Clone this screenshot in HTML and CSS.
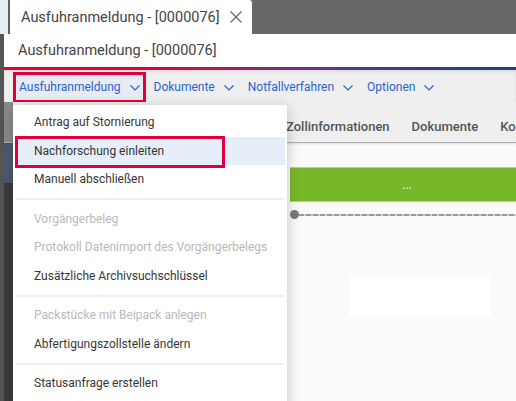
FILE: index.html
```html
<!DOCTYPE html>
<html lang="de">
<head>
<meta charset="utf-8">
<title>Ausfuhranmeldung</title>
<link rel="stylesheet" href="styles.css">
</head>
<body>
<div class="tabbar">
  <div class="tab-prev"></div>
  <div class="tab-sep"></div>
  <div class="tab">
    <span class="tab-title">Ausfuhranmeldung - [0000076]</span>
    <svg class="tab-close" width="12" height="12" viewBox="0 0 12 12"><path d="M0.5 0.5 L11.5 11.5 M11.5 0.5 L0.5 11.5" stroke="#666" stroke-width="1.2" fill="none"/></svg>
  </div>
</div>
<div class="window">
  <div class="header">Ausfuhranmeldung - [0000076]</div>
  <div class="accent"></div>
  <nav class="menubar">
    <div class="menu-item active"><span>Ausfuhranmeldung</span><svg class="chev" width="10" height="6" viewBox="0 0 10 6"><path d="M0.5 0.5 L5 5 L9.5 0.5" stroke="#2a63d4" stroke-width="1.2" fill="none"/></svg></div>
    <div class="menu-item"><span>Dokumente</span><svg class="chev" width="10" height="6" viewBox="0 0 10 6"><path d="M0.5 0.5 L5 5 L9.5 0.5" stroke="#2a63d4" stroke-width="1.2" fill="none"/></svg></div>
    <div class="menu-item"><span>Notfallverfahren</span><svg class="chev" width="10" height="6" viewBox="0 0 10 6"><path d="M0.5 0.5 L5 5 L9.5 0.5" stroke="#2a63d4" stroke-width="1.2" fill="none"/></svg></div>
    <div class="menu-item"><span>Optionen</span><svg class="chev" width="10" height="6" viewBox="0 0 10 6"><path d="M0.5 0.5 L5 5 L9.5 0.5" stroke="#2a63d4" stroke-width="1.2" fill="none"/></svg></div>
  </nav>
  <div class="tabs">
    <span class="tabs-edge"></span>
    <span class="tabs-item">Zollinformationen</span>
    <span class="tabs-item">Dokumente</span>
    <span class="tabs-item">Kontakte</span>
  </div>
  <div class="stage">
    <aside class="rail"><span class="rail-active"></span></aside>
    <div class="main">
      <div class="status-bar">...</div>
      <div class="timeline"><span class="dot"></span><span class="line"></span></div>
      <div class="placeholder"></div>
    </div>
  </div>
  <ul class="dropdown">
    <li class="dd-item">Antrag auf Stornierung</li>
    <li class="dd-item hover">Nachforschung einleiten</li>
    <li class="dd-item">Manuell abschließen</li>
    <li class="dd-sep"></li>
    <li class="dd-item disabled">Vorgängerbeleg</li>
    <li class="dd-item disabled">Protokoll Datenimport des Vorgängerbelegs</li>
    <li class="dd-item">Zusätzliche Archivsuchschlüssel</li>
    <li class="dd-sep"></li>
    <li class="dd-item disabled">Packstücke mit Beipack anlegen</li>
    <li class="dd-item">Abfertigungszollstelle ändern</li>
    <li class="dd-sep"></li>
    <li class="dd-item">Statusanfrage erstellen</li>
  </ul>
</div>
</body>
</html>
```
FILE: styles.css
```css
*, *::before, *::after { box-sizing: border-box; }
html, body { margin: 0; padding: 0; }
body {
  width: 516px;
  height: 401px;
  overflow: hidden;
  background: #555;
  font-family: Roboto, "Liberation Sans", sans-serif;
  color: #333;
}
.tabbar {
  display: flex;
  height: 34px;
  background: #676767;
}
.tab-prev { width: 8px; background: #e6eef8; }
.tab-sep { width: 2px; background: #5e5e5e; }
.tab {
  width: 242px;
  background: #fff;
  display: flex;
  align-items: center;
  padding-left: 11px;
  border-top-right-radius: 3px;
}
.tab-title { font-size: 14.5px; color: #444; }
.tab-close { margin-left: 10px; }
.window {
  position: relative;
  margin-left: 4px;
  height: 367px;
  background: #fafafa;
  display: flex;
  flex-direction: column;
}
.header {
  height: 33px;
  background: #fff;
  padding-left: 14px;
  font-size: 14.5px;
  line-height: 34px;
  color: #444;
}
.accent {
  height: 3px;
  background: linear-gradient(90deg, #e3003b 0%, #e3003b 26%, #a41f60 44%, #6c3586 60%, #3a3d89 78%, #213f86 100%);
}
.menubar {
  height: 32px;
  background: #efefef;
  display: flex;
  align-items: flex-start;
  padding-left: 12px;
  box-shadow: inset 0 2px 3px rgba(0,0,0,0.08);
}
.menu-item {
  margin-top: 5px;
  height: 25px;
  padding: 0 3px 2px;
  margin-right: 8px;
  display: flex;
  align-items: center;
  gap: 9px;
  font-size: 12px;
  color: #2a63d4;
}
.menu-item .chev { margin-top: 2px; }
.menu-item.active {
  background: #e8ebf3;
  outline: 3px solid #e2003c;
}
.tabs {
  height: 41px;
  background: #efefef;
  border-bottom: 1px solid #b3b3b3;
  box-shadow: 0 1px 2px rgba(0,0,0,0.12);
  display: flex;
  align-items: center;
  padding: 8px 0 0 0;
  white-space: nowrap;
  overflow: hidden;
  position: relative;
}
.tabs-edge {
  flex: none;
  align-self: stretch;
  margin-top: -8px;
  width: 9px;
  background: #8a8a8a;
  margin-right: 262px;
}
.tabs-item {
  flex: none;
  padding: 0 11px;
  font-size: 13px;
  font-weight: 500;
  color: #555;
}
.stage {
  flex: 1;
  display: flex;
}
.rail {
  width: 9px;
  background: #3b3b3b;
  display: flex;
  flex-direction: column;
}
.rail-active {
  height: 40px;
  background: #4b5b6f;
}
.main {
  flex: 1;
  padding: 24px 0 0 277px;
}
.status-bar {
  height: 35px;
  background: #77b82a;
  border-top: 1px solid #b2d68a;
  border-bottom: 1px solid #b2d68a;
  color: #fff;
  font-size: 12px;
  display: flex;
  align-items: center;
  justify-content: center;
  padding-left: 8px;
}
.timeline {
  margin-top: 8px;
  height: 9px;
  display: flex;
  align-items: center;
}
.dot {
  width: 9px;
  height: 9px;
  border-radius: 50%;
  background: #777;
  flex: none;
}
.line {
  flex: 1;
  height: 2px;
  background: repeating-linear-gradient(90deg, #999 0 5px, #cfcfcf 5px 7px);
}
.placeholder {
  margin: 58px 0 0 59px;
  width: 142px;
  height: 39px;
  background: #fff;
}
.dropdown {
  position: absolute;
  left: 9px;
  top: 71px;
  width: 274px;
  height: 310px;
  margin: 0;
  padding: 3px 2px 0;
  list-style: none;
  background: #fff;
  border-radius: 2px;
  box-shadow: 0 3px 14px rgba(0,0,0,0.22);
}
.dd-item {
  height: 28.5px;
  line-height: 28.5px;
  padding-left: 19px;
  font-size: 12px;
  color: #363636;
  white-space: nowrap;
}
.dd-item.hover {
  background: #e5eef9;
  position: relative;
}
.dd-item.hover::after {
  content: "";
  position: absolute;
  left: 0;
  top: -1px;
  width: 210px;
  height: 32px;
  border: 3px solid #e2003c;
}
.dd-item.disabled { color: #b9b9b9; }
.dd-sep {
  height: 11px;
  margin: 0 1px;
  background: linear-gradient(#eee, #eee) center / 100% 2px no-repeat;
}
```
